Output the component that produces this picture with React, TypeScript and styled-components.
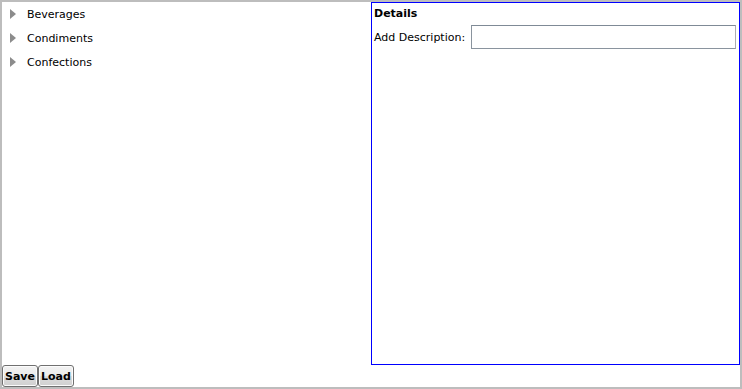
import React, {useState} from 'react';
import styled, {createGlobalStyle} from 'styled-components';

const GlobalStyle = createGlobalStyle`
  html, body {
    margin: 0;
    padding: 0;
    background: #ffffff;
  }
  * {
    box-sizing: border-box;
  }
`;

const categories = ['Beverages', 'Condiments', 'Confections'];

export default function App() {
  const [description, setDescription] = useState('');

  return (
    <>
      <GlobalStyle />
      <Frame>
        <Main>
          <Tree>
            {categories.map(name => (
              <TreeRow key={name}>
                <Expander>
                  <svg width="6" height="10" viewBox="0 0 6 10">
                    <path d="M0 0 L6 5 L0 10 Z" fill="#8c8c8c" />
                  </svg>
                </Expander>
                <TreeLabel>{name}</TreeLabel>
              </TreeRow>
            ))}
          </Tree>
          <DetailsPanel>
            <Heading>Details</Heading>
            <FieldRow>
              <FieldLabel>Add Description:</FieldLabel>
              <TextBox
                value={description}
                onChange={e => setDescription(e.target.value)}
              />
            </FieldRow>
          </DetailsPanel>
        </Main>
        <Toolbar>
          <Button>Save</Button>
          <Button>Load</Button>
        </Toolbar>
      </Frame>
    </>
  );
}

const Frame = styled.div`
  width: 742px;
  height: 389px;
  border: 2px solid #bdbdbd;
  display: flex;
  flex-direction: column;
  font-family: 'DejaVu Sans', Verdana, sans-serif;
  font-size: 11px;
  color: #000;
`;

const Main = styled.div`
  display: flex;
  height: 363px;
`;

const Tree = styled.div`
  width: 369px;
  display: flex;
  flex-direction: column;
`;

const TreeRow = styled.div`
  display: flex;
  align-items: center;
  height: 24px;
`;

const Expander = styled.span`
  width: 25px;
  padding-left: 8px;
  display: flex;
  align-items: center;
`;

const TreeLabel = styled.span`
  color: #000;
`;

const DetailsPanel = styled.div`
  width: 369px;
  border: 1px solid #0000ff;
  padding: 3px 2px 0 2px;
  display: flex;
  flex-direction: column;
`;

const Heading = styled.div`
  font-weight: bold;
  height: 15px;
  line-height: 15px;
`;

const FieldRow = styled.div`
  display: flex;
  align-items: center;
  margin-top: 4px;
`;

const FieldLabel = styled.span`
  width: 97px;
  white-space: nowrap;
`;

const TextBox = styled.input`
  flex: 1;
  height: 24px;
  margin-right: 1px;
  border: 1px solid #abadb3;
  border-top-color: #7f8a96;
  border-left-color: #8a949e;
  border-bottom-color: #8a949e;
  outline: none;
  padding: 0 3px;
  font: inherit;
`;

const Toolbar = styled.div`
  display: flex;
  height: 22px;
`;

const Button = styled.button`
  height: 22px;
  padding: 0 2px;
  margin: 0;
  border: 1px solid #707070;
  border-radius: 3px;
  background: linear-gradient(#f2f2f2 0%, #ebebeb 50%, #dddddd 51%, #cfcfcf 100%);
  font-family: 'DejaVu Sans', Verdana, sans-serif;
  font-size: 11px;
  font-weight: bold;
  color: #000;
  box-shadow: inset 0 0 0 1px #fcfcfc;
`;
